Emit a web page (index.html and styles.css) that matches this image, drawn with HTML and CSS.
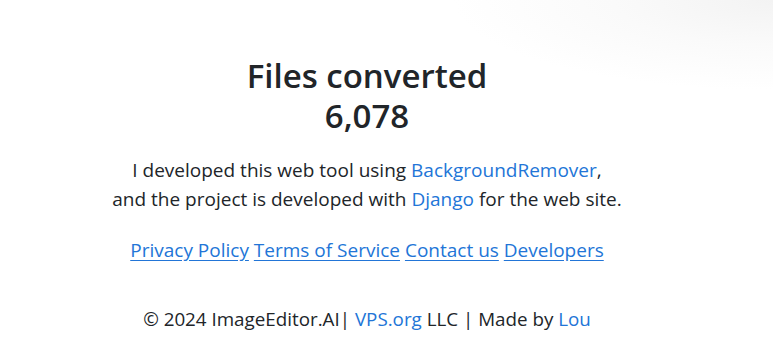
FILE: index.html
```html
<!DOCTYPE html>
<html lang="en">
<head>
    <meta charset="UTF-8">
    <meta name="viewport" content="width=device-width, initial-scale=1.0">
    <title>ImageEditor.AI</title>
    <link rel="stylesheet" href="styles.css">
</head>
<body>
    <div class="page">
        <!-- counter -->
        <section class="stats">
            <h2 class="stats-title">Files converted<br>6,078</h2>
        </section>

        <p class="about">
            I developed this web tool using <a href="#">BackgroundRemover</a>,<br>
            and the project is developed with <a href="#">Django</a> for the web site.
        </p>

        <nav class="links">
            <a href="#">Privacy Policy</a>
            <a href="#">Terms of Service</a>
            <a href="#">Contact us</a>
            <a href="#">Developers</a>
        </nav>

        <footer class="footer">
            &copy; 2024 ImageEditor.AI| <a href="#">VPS.org</a> LLC | Made by <a href="#">Lou</a>
        </footer>
    </div>
</body>
</html>
```

FILE: styles.css
```css
body {
    margin: 0;
    font-family: "Open Sans", "Noto Sans", sans-serif;
    color: #212529;
    background: radial-gradient(ellipse 320px 90px at 100% 0%, #f3f3f3 0%, #fafafa 50%, #ffffff 100%);
    height: 348px;
    overflow: hidden;
}
.page {
    display: flex;
    flex-direction: column;
    align-items: center;
    text-align: center;
    padding: 56px 39px 0 0;
}
.stats-title {
    margin: 0;
    font-size: 33px;
    font-weight: 600;
    line-height: 40px;
}
.about {
    margin: 20px 0 0;
    font-size: 19px;
    line-height: 29px;
}
a { color: #2275d7; text-decoration: none; }
.links {
    margin-top: 22px;
    font-size: 19px;
    line-height: 29px;
}
.links a { text-decoration: underline; text-underline-offset: 3px; }
.footer {
    margin-top: 40px;
    font-size: 18.8px;
    line-height: 29px;
}
```
